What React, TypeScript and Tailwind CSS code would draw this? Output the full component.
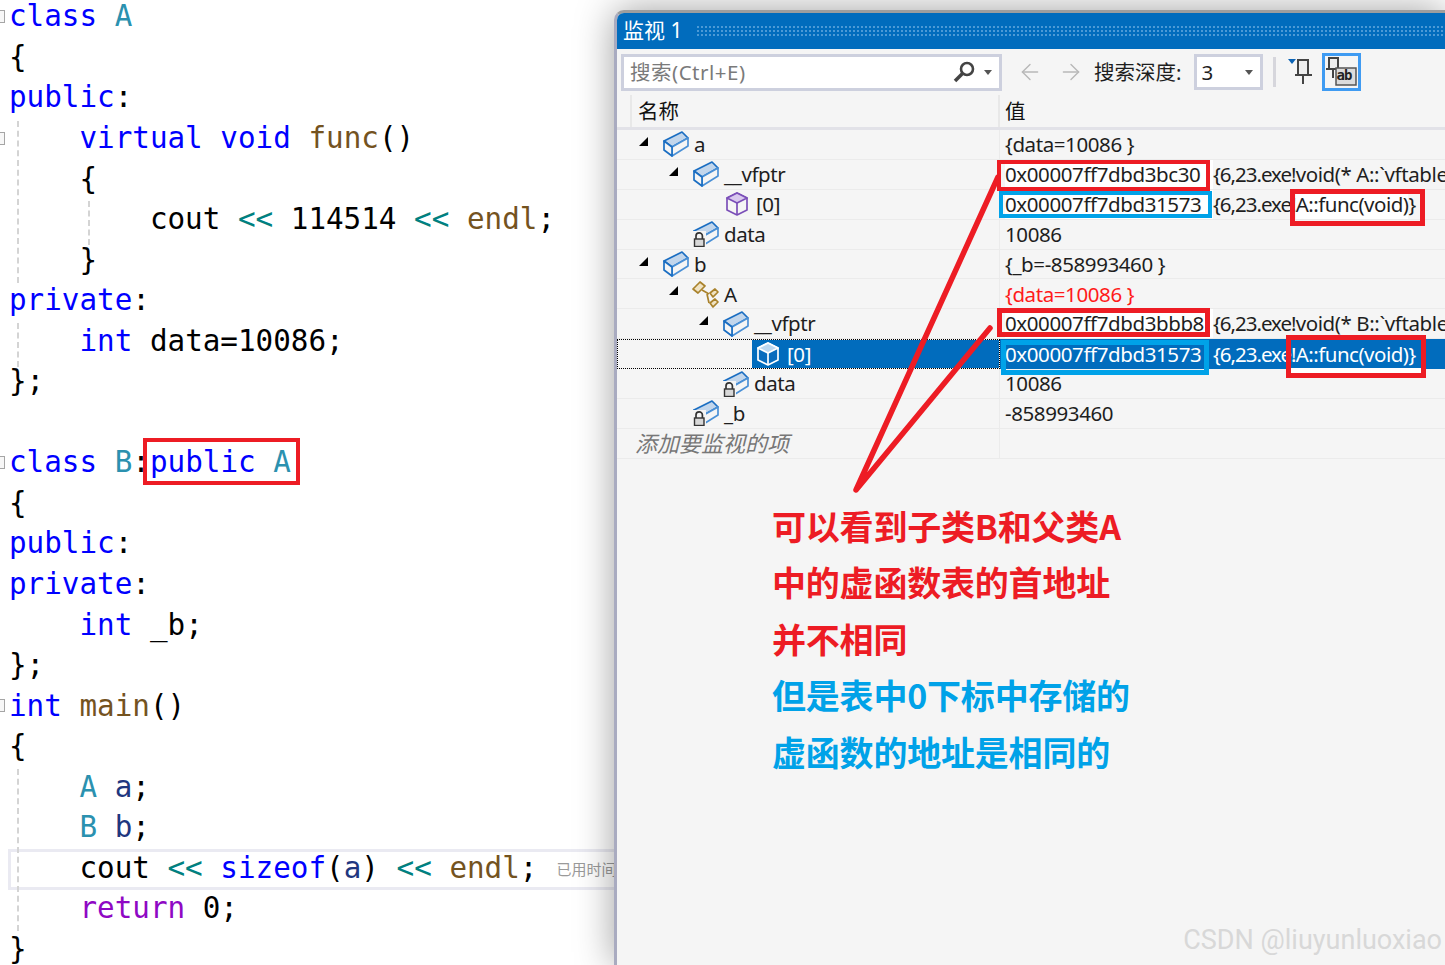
import { ArrowLeft, ArrowRight } from "lucide-react";
import type { ReactNode } from "react";

type Tok = [string, string];

const KW = "text-[#0000ff]";
const TY = "text-[#2b91af]";
const FN = "text-[#74531f]";
const OP = "text-[#008080]";
const TX = "text-black";
const LV = "text-[#1f377f]";
const RT = "text-[#8f08c4]";

const code: { toks: Tok[]; fold?: boolean; current?: boolean; hint?: string }[] = [
  { fold: true, toks: [[KW, "class"], [TX, " "], [TY, "A"]] },
  { toks: [[TX, "{"]] },
  { toks: [[KW, "public"], [TX, ":"]] },
  { fold: true, toks: [[TX, "    "], [KW, "virtual"], [TX, " "], [KW, "void"], [TX, " "], [FN, "func"], [TX, "()"]] },
  { toks: [[TX, "    {"]] },
  { toks: [[TX, "        cout "], [OP, "<<"], [TX, " 114514 "], [OP, "<<"], [TX, " "], [FN, "endl"], [TX, ";"]] },
  { toks: [[TX, "    }"]] },
  { toks: [[KW, "private"], [TX, ":"]] },
  { toks: [[TX, "    "], [KW, "int"], [TX, " data=10086;"]] },
  { toks: [[TX, "};"]] },
  { toks: [[TX, " "]] },
  { fold: true, toks: [[KW, "class"], [TX, " "], [TY, "B"], [TX, ":"], [KW, "public"], [TX, " "], [TY, "A"]] },
  { toks: [[TX, "{"]] },
  { toks: [[KW, "public"], [TX, ":"]] },
  { toks: [[KW, "private"], [TX, ":"]] },
  { toks: [[TX, "    "], [KW, "int"], [TX, " _b;"]] },
  { toks: [[TX, "};"]] },
  { fold: true, toks: [[KW, "int"], [TX, " "], [FN, "main"], [TX, "()"]] },
  { toks: [[TX, "{"]] },
  { toks: [[TX, "    "], [TY, "A"], [TX, " "], [LV, "a"], [TX, ";"]] },
  { toks: [[TX, "    "], [TY, "B"], [TX, " "], [LV, "b"], [TX, ";"]] },
  { current: true, hint: "已用时间 <= 1ms", toks: [[TX, "    cout "], [OP, "<<"], [TX, " "], [KW, "sizeof"], [TX, "("], [LV, "a"], [TX, ") "], [OP, "<<"], [TX, " "], [FN, "endl"], [TX, ";"]] },
  { toks: [[TX, "    "], [RT, "return"], [TX, " 0;"]] },
  { toks: [[TX, "}"]] },
];

function CodeLine({ line }: { line: (typeof code)[number] }) {
  return (
    <div className="relative h-[40.55px] flex items-center whitespace-pre">
      {line.fold && (
        <span className="absolute left-[-8px] top-[13px] w-[13px] h-[13px] border border-[#a5a5a5] bg-[#f7f7f7]" />
      )}
      {line.current && (
        <span className="absolute left-2 right-0 top-[1px] bottom-[-1px] border-[3px] border-r-0 border-[#eaeaf2]" />
      )}
      <span className="pl-[9px]">
        {line.toks.map(([color, text], i) => (
          <span key={i} className={color}>
            {text}
          </span>
        ))}
      </span>
      {line.hint && (
        <span className="ml-[19px] text-[15px] text-[#9a9a9a] font-['Noto_Sans','Noto_Sans_CJK_SC',sans-serif]">
          {line.hint}
        </span>
      )}
    </div>
  );
}

function BoxIcon({ lock }: { lock?: boolean }) {
  return (
    <svg width="26" height="26" viewBox="0 0 26 26" className="shrink-0">
      <path d="M1 10 L19 1 L25 7 L9 16 Z" fill="#c2d6ec" stroke="#1b6ec2" strokeWidth="1.7" strokeLinejoin="round" />
      <path d="M9 16 L25 7 L25 15 L9 25 Z" fill="#f5f5f5" stroke="#4a90d6" strokeWidth="1.7" strokeLinejoin="round" />
      <path d="M1 10 L9 16 L9 25 L1 19 Z" fill="#f5f5f5" stroke="#1b6ec2" strokeWidth="1.7" strokeLinejoin="round" />
      {lock && (
        <g>
          <rect x="0" y="10" width="13" height="16" fill="#f5f5f5" />
          <path d="M3 18 V15 a3.2 3.2 0 0 1 6.4 0 V18" fill="none" stroke="#333" strokeWidth="1.7" />
          <rect x="1.5" y="18" width="9.5" height="7.5" fill="#d8d8d8" stroke="#333" strokeWidth="1.4" />
        </g>
      )}
    </svg>
  );
}

function CubeIcon({ selected }: { selected?: boolean }) {
  const stroke = selected ? "#ffffff" : "#7b4fb8";
  return (
    <svg width="24" height="26" viewBox="0 0 24 26" className="shrink-0 ml-[2px] mr-[2px]">
      <path d="M12 2 L22 7 V19 L12 24 L2 19 V7 Z" fill={selected ? "#0a6cbd" : "#f5f5f5"} stroke={stroke} strokeWidth="1.7" strokeLinejoin="round" />
      <path d="M2 7 L12 2 L22 7 L12 12 Z" fill={selected ? "#bcd8f0" : "#d9c9ee"} stroke={stroke} strokeWidth="1.7" strokeLinejoin="round" />
      <path d="M12 12 V24" stroke={stroke} strokeWidth="1.7" />
    </svg>
  );
}

function BaseIcon() {
  return (
    <svg width="28" height="28" viewBox="0 0 28 28" className="shrink-0 -ml-[1px] -mr-[1px]">
      <g fill="#f0e3c4" stroke="#a9822c" strokeWidth="1.7" strokeLinejoin="round">
        <path d="M1 9 L8 2 L13 6 L6 13 Z" />
        <path d="M18 13 L23 9 L26 12 L21 17 Z" />
        <path d="M18 23 L23 19 L26 22 L21 27 Z" />
      </g>
      <path d="M10 10 L17 14 M15 14 L17 23" stroke="#a9822c" strokeWidth="1.7" fill="none" />
    </svg>
  );
}

const Tri = () => <span className="w-0 h-0 border-l-[9px] border-l-transparent border-b-[9px] border-b-black" />;

const Addr = ({ children, selected }: { children: string; selected?: boolean }) => (
  <span className={`inline-block shrink-0 w-[208px] ${selected ? "" : "bg-white"}`}>{children}</span>
);

const Exe = () => <span className="tracking-[-1px] shrink-0">{"{6,23.exe!"}</span>;

type Row = {
  depth: number;
  open?: boolean;
  icon: ReactNode;
  name: string;
  value: ReactNode;
  selected?: boolean;
};

const rows: Row[] = [
  { depth: 0, open: true, icon: <BoxIcon />, name: "a", value: "{data=10086 }" },
  { depth: 1, open: true, icon: <BoxIcon />, name: "__vfptr", value: <><Addr>0x00007ff7dbd3bc30</Addr><Exe /><span className="shrink-0">{"void(* A::`vftable'}"}</span></> },
  { depth: 2, icon: <CubeIcon />, name: "[0]", value: <><Addr>0x00007ff7dbd31573</Addr><Exe /><span className="shrink-0 bg-white tracking-[-0.5px]">A::func(void)</span>{"}"}</> },
  { depth: 1, icon: <BoxIcon lock />, name: "data", value: "10086" },
  { depth: 0, open: true, icon: <BoxIcon />, name: "b", value: "{_b=-858993460 }" },
  { depth: 1, open: true, icon: <BaseIcon />, name: "A", value: <span className="text-[#ff1a1a]">{"{data=10086 }"}</span> },
  { depth: 2, open: true, icon: <BoxIcon />, name: "__vfptr", value: <><Addr>0x00007ff7dbd3bbb8</Addr><Exe /><span className="shrink-0">{"void(* B::`vftable'}"}</span></> },
  { depth: 3, selected: true, icon: <CubeIcon selected />, name: "[0]", value: <><Addr selected>0x00007ff7dbd31573</Addr><Exe /><span className="shrink-0 tracking-[-0.5px]">{"A::func(void)}"}</span></> },
  { depth: 2, icon: <BoxIcon lock />, name: "data", value: "10086" },
  { depth: 1, icon: <BoxIcon lock />, name: "_b", value: "-858993460" },
];

const INDENT = ["pl-[22px]", "pl-[52px]", "pl-[82px]", "pl-[112px]"];

function WatchRow({ row }: { row: Row }) {
  return (
    <div className="flex h-[29.9px] tracking-[-0.4px]">
      <div className={`w-[383px] shrink-0 flex items-center border-r border-[#ebebeb] ${INDENT[row.depth]} ${row.selected ? "border-y border-l border-dotted border-black" : "border-b"}`}>
        <span className="w-[16px] flex justify-start shrink-0 mt-[-6px]">{row.open && <Tri />}</span>
        <div className={`flex items-center gap-[5px] h-full ${row.selected ? "bg-[#016cbd] text-white flex-1 ml-[6px] pl-[2px]" : "pl-[8px]"}`}>
          {row.icon}
          <span>{row.name}</span>
        </div>
      </div>
      <div className={`flex-1 flex items-center pl-[5px] whitespace-pre overflow-hidden ${row.selected ? "bg-[#016cbd] text-white" : "border-b border-[#ebebeb]"}`}>
        {row.value}
      </div>
    </div>
  );
}

function Rect({ className }: { className: string }) {
  return <div className={`absolute z-20 pointer-events-none ${className}`} />;
}

export default function App() {
  return (
    <div className="relative w-[1445px] h-[965px] overflow-hidden bg-white flex">
      <div className="relative w-[614px] shrink-0 -mt-[3px] text-[29.25px] font-['DejaVu_Sans_Mono',monospace]">
        {code.map((line, i) => (
          <CodeLine key={i} line={line} />
        ))}
        <span className="absolute left-[17px] top-[124px] h-[162px] border-l-2 border-dashed border-[#d4d4d4]" />
        <span className="absolute left-[88px] top-[204px] h-[44px] border-l-2 border-dashed border-[#d4d4d4]" />
        <span className="absolute left-[17px] top-[326px] h-[44px] border-l-2 border-dashed border-[#d4d4d4]" />
        <span className="absolute left-[17px] top-[772px] h-[162px] border-l-2 border-dashed border-[#d4d4d4]" />
      </div>

      <div className="relative z-10 flex-1 mt-[10px] rounded-tl-[10px] border-l-[3px] border-t-[3px] border-[#a9abc0] border-t-[#9e9e9e] bg-[#f5f5f5] shadow-[0_0_38px_rgba(0,0,0,0.38)] text-[20.5px] text-[#1e1e1e] font-['Noto_Sans','Noto_Sans_CJK_SC',sans-serif] overflow-hidden">
        <div className="h-[36px] bg-[#016cbd] flex items-center pl-[6px] text-white text-[21px]">
          <span>监视 1</span>
          <div className="ml-[14px] flex-1 h-[12px] bg-[radial-gradient(circle,#4c9ad6_1.2px,transparent_1.4px)] bg-[length:4px_4px]" />
        </div>

        <div className="h-[46px] flex items-center pl-[4px]">
          <div className="w-[381px] h-[37px] border-[3px] border-[#cdd0de] bg-white flex items-center pl-[6px] text-[#7a7a7a]">
            <span className="tracking-[0.5px]">搜索(Ctrl+E)</span>
            <svg width="24" height="24" viewBox="0 0 24 24" className="ml-auto">
              <circle cx="15" cy="9" r="6" fill="none" stroke="#444" strokeWidth="2.6" />
              <path d="M11 13 L3 21" stroke="#444" strokeWidth="3.6" />
            </svg>
            <span className="ml-[8px] mr-[7px] w-0 h-0 border-x-[4px] border-x-transparent border-t-[5px] border-t-[#555]" />
          </div>
          <ArrowLeft className="ml-[15px] text-[#b8b8b8]" size={26} strokeWidth={1.3} />
          <ArrowRight className="ml-[15px] text-[#b8b8b8]" size={26} strokeWidth={1.3} />
          <span className="ml-[10px]">搜索深度:</span>
          <div className="ml-[12px] w-[69px] h-[36px] border-[3px] border-[#cdd0de] bg-white flex items-center pl-[5px]">
            <span>3</span>
            <span className="ml-auto mr-[7px] w-0 h-0 border-x-[4px] border-x-transparent border-t-[5px] border-t-[#555]" />
          </div>
          <span className="ml-[10px] w-[3px] h-[30px] bg-[#d6d6dc]" />
          <svg width="26" height="30" viewBox="0 0 26 30" className="ml-[12px]">
            <path d="M0 2 H8 L4 7 Z" fill="#0b63b5" />
            <path d="M10 3 H20 V18 H10 Z" fill="#eee" stroke="#444" strokeWidth="2" />
            <path d="M7 18 H24 M15 18 V27" stroke="#444" strokeWidth="2" />
          </svg>
          <div className="ml-[8px] w-[39px] h-[38px] border-[3px] border-[#3f9bf2] relative">
            <svg width="33" height="32" viewBox="0 0 33 32">
              <path d="M4 2 H13 V13 H4 Z" fill="#eee" stroke="#444" strokeWidth="2" />
              <path d="M1 13 H15 M8 13 V22" stroke="#444" strokeWidth="2" />
              <path d="M11 12 H31 V29 H11 Z" fill="#dcdcdc" stroke="#555" strokeWidth="1.5" />
            </svg>
            <span className="absolute left-[12px] top-[10px] text-[14px] leading-[18px] font-bold font-['DejaVu_Sans_Mono',monospace] tracking-[-1px] text-[#222]">ab</span>
          </div>
        </div>

        <div className="h-[35px] flex border-b-[3px] border-[#e2e2e8] text-[#111]">
          <div className="w-[15px] border-r-2 border-[#e8e8e8]" />
          <div className="w-[368px] pl-[6px] flex items-center border-r-2 border-[#e8e8e8]">名称</div>
          <div className="pl-[5px] flex items-center">值</div>
        </div>

        {rows.map((row, i) => (
          <WatchRow key={i} row={row} />
        ))}
        <div className="flex h-[30px] border-b border-[#ebebeb] text-[#777] italic">
          <div className="w-[383px] pl-[18px] flex items-center border-r border-[#ebebeb] text-[22px]">添加要监视的项</div>
        </div>

        <div className="mt-[39px] pl-[155px] text-[34px] leading-[56.5px] font-bold tracking-[-0.2px] font-['Noto_Sans_CJK_SC','Noto_Sans',sans-serif]">
          <div className="text-[#ed1c24]">可以看到子类B和父类A</div>
          <div className="text-[#ed1c24]">中的虚函数表的首地址</div>
          <div className="text-[#ed1c24]">并不相同</div>
          <div className="text-[#00a2e8]">但是表中0下标中存储的</div>
          <div className="text-[#00a2e8]">虚函数的地址是相同的</div>
        </div>
      </div>

      <Rect className="left-[143px] top-[438px] w-[157px] h-[47px] border-[4px] border-[#ed1c24]" />
      <Rect className="left-[997px] top-[160px] w-[213px] h-[31px] border-[4px] border-[#ed1c24]" />
      <Rect className="left-[999px] top-[191px] w-[213px] h-[27px] border-[4px] border-[#00a2e8]" />
      <Rect className="left-[1290px] top-[189px] w-[135px] h-[37px] border-[5px] border-[#ed1c24]" />
      <Rect className="left-[997px] top-[308px] w-[213px] h-[29px] border-[5px] border-[#ed1c24]" />
      <Rect className="left-[1001px] top-[340px] w-[208px] h-[35px] border-[5px] border-[#00a2e8]" />
      <Rect className="left-[1286px] top-[335px] w-[140px] h-[43px] border-[5px] border-[#ed1c24]" />
      <div className="absolute z-[15] left-[1290px] top-[368px] w-[132px] h-[6px] bg-white" />

      <svg width="1445" height="965" className="absolute left-0 top-0 z-20 pointer-events-none">
        <path d="M998 177 L856 490 L990 328" fill="none" stroke="#ed1c24" strokeWidth="5.5" strokeLinecap="round" strokeLinejoin="round" />
      </svg>

      <div className="absolute z-20 right-[3px] top-[920px] text-[27px] text-[#d8d8d8] font-['Roboto',sans-serif]">
        CSDN @liuyunluoxiao
      </div>
    </div>
  );
}
